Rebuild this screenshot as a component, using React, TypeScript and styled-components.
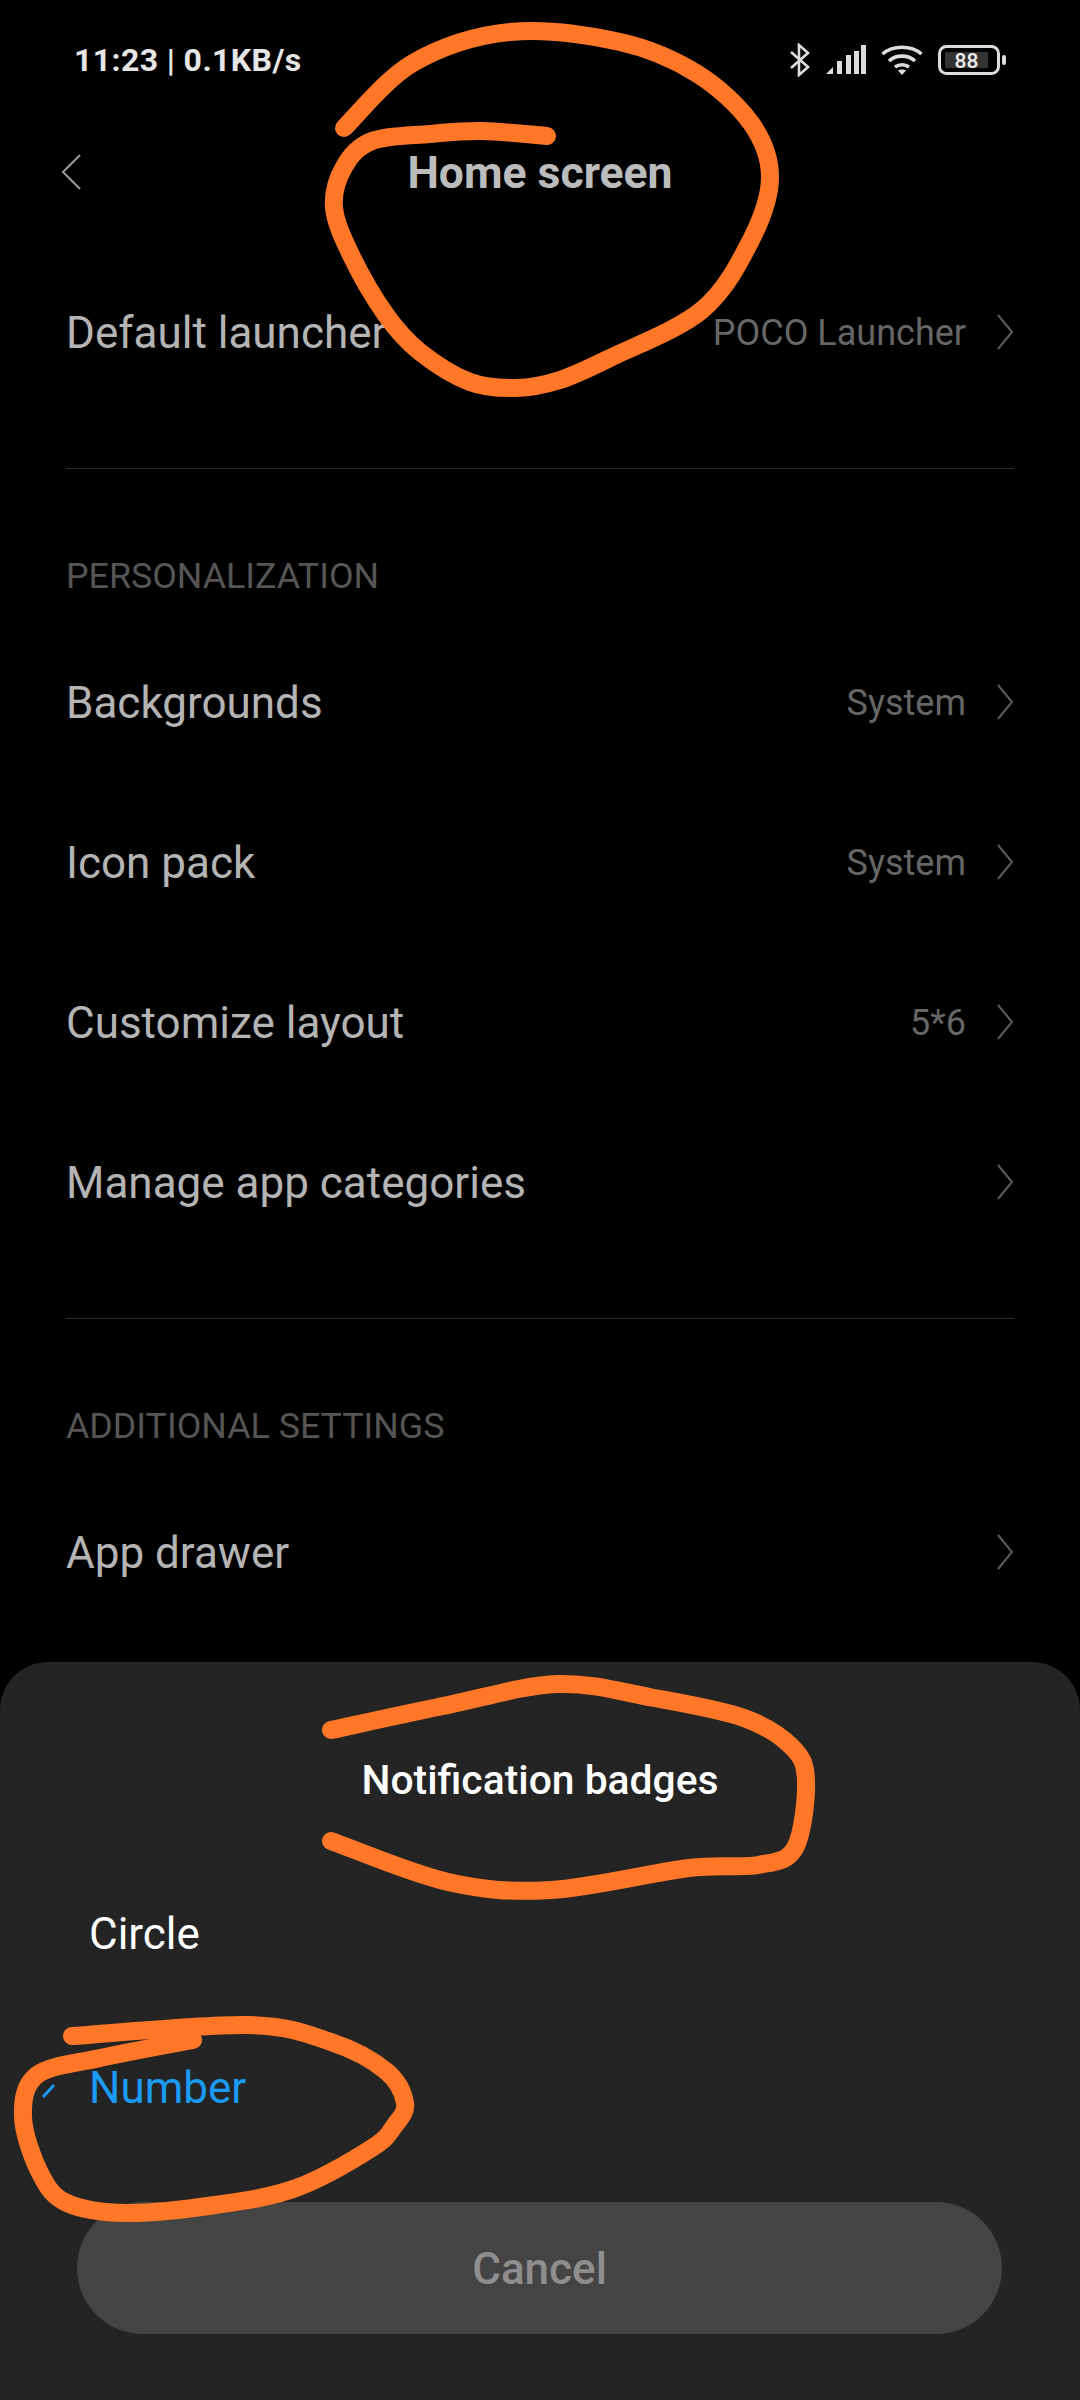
import * as React from "react";
import styled, { createGlobalStyle } from "styled-components";

const GlobalStyle = createGlobalStyle`
  html, body {
    margin: 0;
    padding: 0;
    background: #000;
  }
  body {
    font-family: Roboto, "Liberation Sans", sans-serif;
  }
`;

const Page = styled.div`
  position: relative;
  width: 1080px;
  height: 2400px;
  overflow: hidden;
  background: #000;
  display: flex;
  flex-direction: column;
`;

const Settings = styled.div`
  flex: 1;
  min-height: 0;
`;

const StatusBar = styled.div`
  height: 120px;
  padding: 0 74px;
  display: flex;
  align-items: center;
  justify-content: space-between;
`;

const Clock = styled.span`
  font-size: 32px;
  font-weight: 700;
  color: #e6e6e6;
  letter-spacing: 0.4px;
`;

const StatusIcons = styled.div`
  display: flex;
  align-items: center;
  gap: 15px;
`;

const Header = styled.div`
  position: relative;
  height: 104px;
  margin-bottom: 28px;
  display: flex;
  align-items: center;
  justify-content: center;
`;

const BackIcon = styled.svg`
  position: absolute;
  left: 60px;
  top: 34px;
`;

const Title = styled.h1`
  margin: 2px 0 0;
  font-size: 44.5px;
  font-weight: 700;
  color: #bcbcbc;
`;

const Row = styled.div`
  height: 160px;
  padding: 0 66px;
  display: flex;
  align-items: center;
  justify-content: space-between;
`;

const RowLabel = styled.span`
  padding-top: 2px;
  font-size: 44px;
  color: #b4b4b4;
`;

const RowRight = styled.div`
  display: flex;
  align-items: center;
  gap: 30px;
`;

const RowValue = styled.span`
  padding-top: 2px;
  font-size: 36px;
  color: #666;
`;

const Divider = styled.div`
  height: 1px;
  margin: 56px 66px 0;
  background: #2a2a2a;
`;

const SectionTitle = styled.div`
  height: 66px;
  padding: 87px 66px 0;
  font-size: 35.8px;
  line-height: 40px;
  color: #555;
`;

const Sheet = styled.div`
  height: 738px;
  box-sizing: border-box;
  padding-top: 88px;
  background: #242424;
  border-radius: 48px 48px 0 0;
`;

const SheetTitle = styled.div`
  margin-bottom: 46px;
  font-size: 40.8px;
  font-weight: 500;
  line-height: 60px;
  text-align: center;
  color: #fff;
`;

const Option = styled.div<{ $selected?: boolean }>`
  position: relative;
  height: 154px;
  box-sizing: border-box;
  padding: 2px 0 0 89px;
  display: flex;
  align-items: center;
  font-size: 44px;
  color: ${props => (props.$selected ? "#1a9bf5" : "#fff")};
`;

const CheckIcon = styled.svg`
  position: absolute;
  left: 40px;
  top: 72px;
`;

const CancelButton = styled.div`
  height: 132px;
  box-sizing: border-box;
  padding-top: 2px;
  margin: 38px 78px 0 77px;
  border-radius: 66px;
  background: #444;
  display: flex;
  align-items: center;
  justify-content: center;
  font-size: 44px;
  font-weight: 500;
  color: #8e8e8e;
`;

const Scribbles = styled.svg`
  position: absolute;
  left: 0;
  top: 0;
  pointer-events: none;
`;

type Point = [number, number];

// smooth line through the points, so the marker strokes don't look polygonal
const smoothPath = (pts: Point[]): string => {
  let d = `M${pts[0][0]} ${pts[0][1]}`;
  for (let i = 0; i < pts.length - 1; i++) {
    const p0 = pts[i - 1] || pts[i];
    const p1 = pts[i];
    const p2 = pts[i + 1];
    const p3 = pts[i + 2] || p2;
    const c1x = p1[0] + (p2[0] - p0[0]) / 6;
    const c1y = p1[1] + (p2[1] - p0[1]) / 6;
    const c2x = p2[0] - (p3[0] - p1[0]) / 6;
    const c2y = p2[1] - (p3[1] - p1[1]) / 6;
    d += ` C${c1x} ${c1y} ${c2x} ${c2y} ${p2[0]} ${p2[1]}`;
  }
  return d;
};

const titleScribble: Point[] = [
  [344, 128], [413, 63], [510, 32], [620, 42], [696, 73], [751, 123], [770, 177],
  [751, 240], [702, 310], [610, 358], [560, 380], [516, 388], [470, 382], [420, 352], [386, 315],
  [351, 255], [334, 207], [344, 167], [372, 141], [430, 134], [482, 131], [547, 136],
];

const sheetScribble: Point[] = [
  [331, 1730], [448, 1705], [558, 1684], [654, 1698], [744, 1718], [792, 1747],
  [806, 1781], [795, 1848], [758, 1865], [689, 1868], [551, 1890], [448, 1882], [331, 1841],
];

const numberScribble: Point[] = [
  [72, 2036], [248, 2025], [331, 2042], [386, 2071], [405, 2103], [395, 2125], [372, 2148], [296, 2188],
  [215, 2205], [127, 2213], [67, 2203], [40, 2173], [23, 2117], [37, 2075], [100, 2058], [193, 2040],
];

const Chevron = () => (
  <svg width="18" height="36" viewBox="0 0 18 36" fill="none">
    <path d="M2 1 L16 18 L2 35" stroke="#5c5c5c" strokeWidth="2" />
  </svg>
);

const rows = [
  { label: "Backgrounds", value: "System" },
  { label: "Icon pack", value: "System" },
  { label: "Customize layout", value: "5*6" },
  { label: "Manage app categories", value: "" },
];

const SettingRow = ({ label, value }: { label: string; value?: string }) => (
  <Row>
    <RowLabel>{label}</RowLabel>
    <RowRight>
      {value ? <RowValue>{value}</RowValue> : null}
      <Chevron />
    </RowRight>
  </Row>
);

export default function App() {
  return (
    <Page>
      <GlobalStyle />
      <Settings>
        <StatusBar>
          <Clock>11:23 | 0.1KB/s</Clock>
          <StatusIcons>
            <svg width="22" height="34" viewBox="0 0 22 34" fill="none">
              <path d="M2 9 L19 24 L10 32 V2 L19 10 L2 25" stroke="#ddd" strokeWidth="2.6" />
            </svg>
            <svg width="40" height="30" viewBox="0 0 40 30" fill="#ddd">
              <path d="M0 29 L7 22 V29 Z" />
              <rect x="11" y="16" width="5" height="13" />
              <rect x="20" y="10" width="5" height="19" />
              <rect x="28" y="6" width="5" height="23" />
              <rect x="35" y="0" width="5" height="29" />
            </svg>
            <svg width="42" height="32" viewBox="0 0 42 32" fill="none" stroke="#ddd" strokeWidth="3.6">
              <path d="M1.5 10 C12 1 30 1 40.5 10" />
              <path d="M8 17 C15 10.5 27 10.5 34 17" />
              <path d="M14 23 C18 20 24 20 28 23" />
              <path d="M21 31 L17 26.5 C19 25.3 23 25.3 25 26.5 Z" fill="#ddd" stroke="none" />
            </svg>
            <svg width="68" height="30" viewBox="0 0 68 30" fill="none">
              <rect x="1.5" y="1.5" width="59" height="27" rx="7" stroke="#ddd" strokeWidth="3" />
              <rect x="7" y="7" width="43" height="16" fill="#333" />
              <rect x="64" y="10" width="4" height="10" rx="2" fill="#ddd" />
              <text x="28.5" y="23" textAnchor="middle" fontFamily="Roboto, sans-serif" fontSize="21" fontWeight="500" fill="#eee">
                88
              </text>
            </svg>
          </StatusIcons>
        </StatusBar>
        <Header>
          <BackIcon width="22" height="36" viewBox="0 0 22 36" fill="none">
            <path d="M20 1 L3 18 L20 35" stroke="#9a9a9a" strokeWidth="2" />
          </BackIcon>
          <Title>Home screen</Title>
        </Header>
        <SettingRow label="Default launcher" value="POCO Launcher" />
        <Divider />
        <SectionTitle>PERSONALIZATION</SectionTitle>
        {rows.map(row => (
          <SettingRow key={row.label} label={row.label} value={row.value} />
        ))}
        <Divider />
        <SectionTitle>ADDITIONAL SETTINGS</SectionTitle>
        <SettingRow label="App drawer" />
      </Settings>
      <Sheet>
        <SheetTitle>Notification badges</SheetTitle>
        <Option>Circle</Option>
        <Option $selected>
          {/* only this bit of the tick shows, the rest is under the marker */}
          <CheckIcon width="18" height="18" viewBox="0 0 18 18" fill="none">
            <path d="M3 15 L14 3" stroke="#1a9bf5" strokeWidth="3" />
          </CheckIcon>
          Number
        </Option>
        <CancelButton>Cancel</CancelButton>
      </Sheet>
      <Scribbles width="1080" height="2400" viewBox="0 0 1080 2400" fill="none" stroke="#ff7727" strokeWidth="18" strokeLinecap="round" strokeLinejoin="round">
        <path d={smoothPath(titleScribble)} />
        <path d={smoothPath(sheetScribble)} />
        <path d={smoothPath(numberScribble)} />
      </Scribbles>
    </Page>
  );
}
